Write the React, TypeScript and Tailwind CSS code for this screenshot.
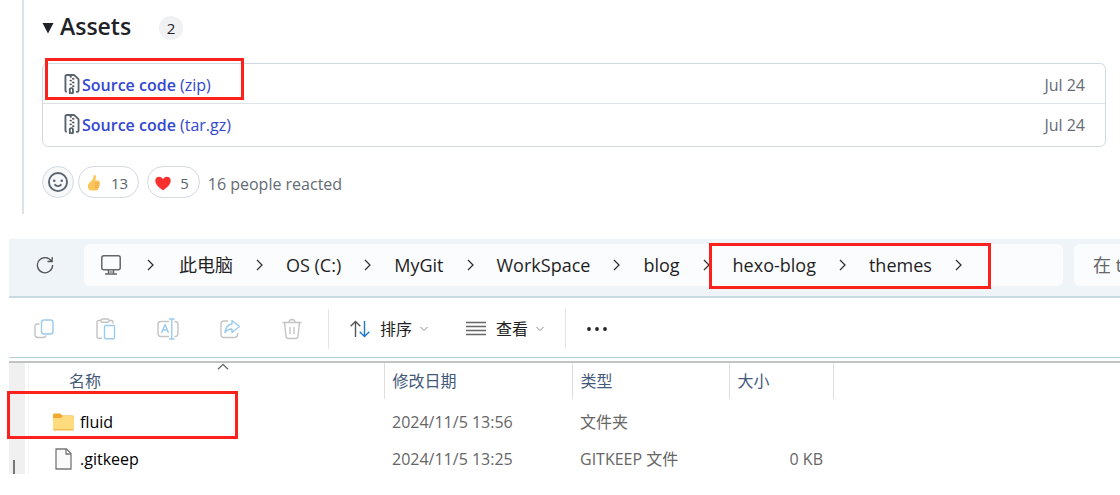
import { Fragment, type ReactNode } from "react";

const ZIP_PATH =
  "M3.5 1.75v11.5c0 .09.048.173.126.217a.75.75 0 0 1-.752 1.298A1.748 1.748 0 0 1 2 13.25V1.75C2 .784 2.784 0 3.75 0h5.586c.464 0 .909.185 1.237.513l2.914 2.914c.329.328.513.773.513 1.237v8.586A1.75 1.75 0 0 1 12.25 15h-.5a.75.75 0 0 1 0-1.5h.5a.25.25 0 0 0 .25-.25V4.664a.25.25 0 0 0-.073-.177L9.513 1.573a.25.25 0 0 0-.177-.073H7.25a.75.75 0 0 1 0 1.5h-.5a.75.75 0 0 1 0-1.5h-3a.25.25 0 0 0-.25.25Zm3.75 8.75h.5c.966 0 1.75.784 1.75 1.75v3a.75.75 0 0 1-.75.75h-2.5a.75.75 0 0 1-.75-.75v-3c0-.966.784-1.75 1.75-1.75ZM6 5.25a.75.75 0 0 1 .75-.75h.5a.75.75 0 0 1 0 1.5h-.5A.75.75 0 0 1 6 5.25Zm.75 2.25h.5a.75.75 0 0 1 0 1.5h-.5a.75.75 0 0 1 0-1.5ZM8 6.75A.75.75 0 0 1 8.75 6h.5a.75.75 0 0 1 0 1.5h-.5A.75.75 0 0 1 8 6.75ZM8.75 3h.5a.75.75 0 0 1 0 1.5h-.5a.75.75 0 0 1 0-1.5ZM8 9.75A.75.75 0 0 1 8.75 9h.5a.75.75 0 0 1 0 1.5h-.5A.75.75 0 0 1 8 9.75Zm-1 2.5v2.25h1v-2.25a.25.25 0 0 0-.25-.25h-.5a.25.25 0 0 0-.25.25Z";

const SMILEY_PATH =
  "M8 0a8 8 0 1 1 0 16A8 8 0 0 1 8 0ZM1.5 8a6.5 6.5 0 1 0 13 0 6.5 6.5 0 0 0-13 0Zm3.82 1.636a.75.75 0 0 1 1.038.175l.007.009c.103.118.22.222.35.31.264.178.683.37 1.285.37.602 0 1.02-.192 1.285-.371.13-.088.247-.192.35-.31l.007-.008a.75.75 0 0 1 1.222.87l-.614-.431c.614.43.614.431.613.431v.001l-.001.002-.002.003-.005.007-.014.019a2.066 2.066 0 0 1-.184.213c-.16.166-.338.316-.53.445-.63.418-1.37.638-2.127.629-.946 0-1.652-.308-2.126-.63a3.331 3.331 0 0 1-.715-.657l-.014-.02-.005-.006-.002-.003v-.002h-.001l.613-.432-.614.43a.75.75 0 0 1 .183-1.044ZM12 7a1 1 0 1 1-2 0 1 1 0 0 1 2 0ZM5 8a1 1 0 1 1 0-2 1 1 0 0 1 0 2Z";

function Highlight({ className }: { className: string }) {
  return (
    <span
      aria-hidden="true"
      className={`pointer-events-none absolute z-10 border-3 border-[#fb221d] ${className}`}
    />
  );
}

function AssetRow({ kind, marked }: { kind: string; marked?: boolean }) {
  return (
    <li className="relative flex h-10 items-center pr-5 pl-[19px]">
      <svg viewBox="0 0 16 16" className="size-5 fill-[#59636e]" aria-hidden="true">
        <path d={ZIP_PATH} />
      </svg>
      <a href="#" className="pt-0.5 text-base leading-6 text-[#3348cf]">
        <span className="font-semibold">Source code</span> ({kind})
      </a>
      <span className="ml-auto pt-0.5 text-base leading-6 text-[#636b75]">Jul 24</span>
      {marked && <Highlight className="-top-1.5 left-0.5 h-[42px] w-[199px]" />}
    </li>
  );
}

function Reaction({ label, count, children }: { label: string; count: number; children: ReactNode }) {
  return (
    <button
      aria-label={label}
      className="flex h-8 items-center gap-2 rounded-full border border-[#d3dae1] pt-0.5 pr-2.5 pl-1.5 text-[15px] text-[#59636e]"
    >
      {children}
      <span>{count}</span>
    </button>
  );
}

function Release() {
  return (
    <section className="ml-[22px] h-[214px] border-l-2 border-[#dde2e7] pr-3.5 pl-[18px] pt-2">
      <details open className="group">
        <summary className="flex list-none items-center">
          <svg viewBox="0 0 12 12" className="mt-1 size-3 fill-[#1f2328]" aria-hidden="true">
            <path d="M0.5 1h11L6 11.5z" />
          </svg>
          <h3 className="ml-1.5 text-[23px] leading-9 font-semibold text-[#1f2328]">Assets</h3>
          <span className="mt-1 ml-7 flex size-6 items-center justify-center rounded-full bg-[#eff1f3] text-[15px] text-[#1f2328]">
            2
          </span>
        </summary>
        <ul className="mt-[19px] divide-y divide-[#dde2e7] rounded-md border border-[#d1d9e0] pb-0.5">
          <AssetRow kind="zip" marked />
          <AssetRow kind="tar.gz" />
        </ul>
      </details>
      <div className="mt-[19px] flex items-center">
        <button
          aria-label="Add reaction"
          className="mr-1 flex size-8 items-center justify-center rounded-full border border-[#d3dae1] bg-[#f6f8fa]"
        >
          <svg viewBox="0 0 16 16" className="size-5 fill-[#59636e]" aria-hidden="true">
            <path d={SMILEY_PATH} />
          </svg>
        </button>
        <Reaction label="Thumbs up" count={13}>
          <svg viewBox="0 0 18 18" className="size-4.5" aria-hidden="true">
            <path
              d="M9 1.2c1-.5 2 .2 2 1.5 0 1.500-.5 2.800-.8 3.900h2.900c1.500 0 2 1.400 1.300 2.200.7.600.6 1.600-.1 2.100.5.700.2 1.600-.5 2 .3.800 0 1.500-.6 1.800.1 1-.6 1.700-1.700 1.700H7c-2.500 0-4.200-1.300-4.200-3.900 0-2.200 1.200-3.500 2.900-4.900C7.300 6.200 8.500 4 8.600 2.100c0-.5.1-.8.4-.9z"
              fill="#fbc75b"
            />
            <path
              d="M10 9.100h4.200M10 11.300h4M10 13.400h3.300"
              stroke="#e69a3d"
              strokeWidth="0.700"
              strokeLinecap="round"
            />
          </svg>
        </Reaction>
        <div className="ml-2 flex">
          <Reaction label="Heart" count={5}>
            <svg viewBox="0 0 18 18" className="size-4.5" aria-hidden="true">
              <path
                d="M9 16.300C4.600 13.400 1.300 10.200 1.300 6.700c0-2.500 1.700-4 3.800-4 1.800 0 3.200 1 3.900 2.500.7-1.500 2.100-2.500 3.900-2.500 2.100 0 3.800 1.500 3.800 4 0 3.500-3.300 6.700-7.700 9.600z"
                fill="#f8312f"
              />
            </svg>
          </Reaction>
        </div>
        <span className="mt-1 ml-2 text-base leading-6 text-[#636b75]">16 people reacted</span>
      </div>
    </section>
  );
}

function Chevron() {
  return (
    <svg viewBox="0 0 9 12" className="h-3 w-[9px] fill-none stroke-[#333]" aria-hidden="true">
      <path d="M2 1l5 5-5 5" strokeWidth="1.300" />
    </svg>
  );
}

function Caret() {
  return (
    <svg viewBox="0 0 8 6" className="ml-2 h-1.5 w-2 fill-none stroke-[#8a8a8a]" aria-hidden="true">
      <path d="M.5 1L4 4.500 7.500 1" />
    </svg>
  );
}

const path = ["此电脑", "OS (C:)", "MyGit", "WorkSpace", "blog"];

function AddressBar() {
  return (
    <div className="flex h-[59px] items-start border-b-2 border-[#c8d9e2] bg-[#eef4f8] pt-[5px] text-lg text-[#1f1f1f]">
      <button aria-label="Refresh" className="mr-7 ml-6 flex h-[42px] w-[23px] items-center justify-center">
        <svg viewBox="0 0 18 18" className="size-4.5 fill-none stroke-[#555]" aria-hidden="true">
          <path d="M15.500 5.200A7.600 7.600 0 1 0 16.600 9M16.200 1v4.500h-4.700" strokeWidth="1.300" />
        </svg>
      </button>
      <nav aria-label="Address" className="flex h-[42px] min-w-0 flex-1 items-center rounded-md bg-[#fbfcfe] pl-[17px]">
        <svg viewBox="0 0 20 20" className="mr-[25px] size-5 shrink-0 overflow-visible fill-none" aria-hidden="true">
          <rect x=".8" y=".8" width="18.400" height="14" rx="2" stroke="#666" strokeWidth="1.500" />
          <path d="M7.500 15v3.500M12.500 15v3.500M4 19h12" stroke="#666" strokeWidth="1.500" />
          <path d="M8.200 15.500h3.600v2.600H8.200z" fill="#aaa" />
        </svg>
        <Chevron />
        <ol className="ml-6 flex items-center gap-[22px] whitespace-nowrap">
          {path.map((name) => (
            <Fragment key={name}>
              <li>{name}</li>
              <li>
                <Chevron />
              </li>
            </Fragment>
          ))}
          <li className="relative flex items-center gap-[22px]">
            <span>hexo-blog</span>
            <Chevron />
            <span>themes</span>
            <Chevron />
            <Highlight className="-top-2 -right-7 -bottom-2.5 -left-6" />
          </li>
        </ol>
      </nav>
      <input
        aria-label="Search"
        placeholder="在 themes 中搜索"
        className="ml-[11px] h-[42px] w-[46px] rounded-l-md bg-[#fbfcfe] pl-[19px] placeholder:text-[#666]"
      />
    </div>
  );
}

function Tool({ label, children }: { label: string; children: ReactNode }) {
  return (
    <button aria-label={label} className="flex size-6 items-center justify-center">
      <svg viewBox="0 0 22 22" className="size-[22px] fill-none" strokeWidth="1.400" strokeLinejoin="round" aria-hidden="true">
        {children}
      </svg>
    </button>
  );
}

function Toolbar() {
  return (
    <div className="flex h-[60px] items-center border-b border-[#b5ced9] pt-0.5 pl-[23px] text-base text-[#222]">
      <div className="flex gap-[38px]">
        <Tool label="Copy">
          <path d="M6.500 6H4.500Q2 6 2 8.500v8Q2 19.500 5 19.500h5q2.500 0 3-2" stroke="#c4c4c4" />
          <rect x="8.500" y="2" width="11.500" height="14" rx="2.500" stroke="#9ccbf0" />
        </Tool>
        <Tool label="Paste">
          <path d="M7 20.300H3.800Q2 20.300 2 18.500V4.300Q2 2.500 3.800 2.500H6M14 2.500h2.200Q18 2.500 18 4.300V5.500" stroke="#c4c4c4" />
          <rect x="6" y="1" width="8" height="3.300" rx="1.600" stroke="#c4c4c4" />
          <rect x="9.500" y="7.500" width="10" height="13.300" rx="1.500" stroke="#9ccbf0" />
        </Tool>
        <Tool label="Rename">
          <path d="M12 3.500H4Q1 3.500 1 6.500v9q0 3 3 3h8M17.500 3.500q3.500 0 3.500 3v9q0 3-3.500 3" stroke="#c4c4c4" />
          <path d="M4.500 15L8 6.500 11.500 15M5.800 12h4.400M12 1h5.500M12 21h5.500M14.800 1v20" stroke="#9ccbf0" />
        </Tool>
        <Tool label="Share">
          <path d="M9 3H5Q2 3 2 6v10.500q0 3 3 3h10.500q3 0 3-3V15" stroke="#c4c4c4" />
          <path d="M13 2.500L20.500 8.500 13 14.500V11Q8.500 11 6 14.500 7 6.500 13 6z" stroke="#9ccbf0" />
        </Tool>
        <Tool label="Delete">
          <path d="M1.500 4.500h19M3.500 4.500L5 18.500Q5.200 20.500 7 20.500h8q1.800 0 2-2L18.500 4.500M8 4.500Q8 1.500 11 1.500T14 4.500M9 9v7M13 9v7" stroke="#c4c4c4" />
        </Tool>
      </div>
      <span className="mr-[21px] ml-6 h-10 w-px bg-[#e4e4e4]" />
      <button className="flex items-center">
        <svg viewBox="0 0 20 18" className="mr-2.5 h-4.5 w-5 fill-none" strokeWidth="1.400" aria-hidden="true">
          <path d="M5.500 17V1.500M.7 6.300L5.500 1.500l4.800 4.800" stroke="#555" />
          <path d="M14.500 1v15.500M9.700 11.700l4.800 4.800 4.800-4.800" stroke="#1a78cf" />
        </svg>
        排序
        <Caret />
      </button>
      <button className="ml-[38px] flex items-center">
        <svg viewBox="0 0 20 16" className="mr-2.5 h-4 w-5" aria-hidden="true">
          <path d="M0 1.500h20M0 5.500h20M0 9.500h20M0 13.500h20" stroke="#666" strokeWidth="1.300" />
        </svg>
        查看
        <Caret />
      </button>
      <span className="mx-[21px] h-10 w-px bg-[#e4e4e4]" />
      <button aria-label="More" className="flex size-5 items-center">
        <svg viewBox="0 0 20 4" className="h-1 w-5 fill-[#222]" aria-hidden="true">
          <circle cx="2" cy="2" r="1.900" />
          <circle cx="10" cy="2" r="1.900" />
          <circle cx="18" cy="2" r="1.900" />
        </svg>
      </button>
    </div>
  );
}

function FileList() {
  const head = "h-9 border-r border-[#dedede] pl-2 text-left font-normal text-[#43597a]";
  return (
    <div className="mt-[3px] flex h-[113px] overflow-hidden border-t-2 border-[#bfc3c4]">
      <div className="flex w-4 items-end bg-[#f0f0f0] pl-1">
        <span className="h-3.5 w-0.5 bg-[#777]" />
      </div>
      <div className="relative ml-[3px] min-w-0 flex-1 border-l border-[#f3f3f3]">
        <svg viewBox="0 0 12 7" className="absolute top-0 left-[188px] h-[7px] w-3 fill-none stroke-[#666]" aria-hidden="true">
          <path d="M1 6.300l5-5 5 5" strokeWidth="1.300" />
        </svg>
        <table className="table-fixed border-collapse text-base text-[#666]">
          <colgroup>
            <col className="w-[355px]" />
            <col className="w-[188px]" />
            <col className="w-[157px]" />
            <col className="w-[104px]" />
          </colgroup>
          <thead>
            <tr>
              <th className="h-9 border-r border-[#dedede] pl-10 text-left font-normal text-[#43597a]">名称</th>
              <th className={head}>修改日期</th>
              <th className={head}>类型</th>
              <th className={head}>大小</th>
            </tr>
          </thead>
          <tbody>
            <tr className="h-11">
              <td className="pt-0.5 pl-6 text-black">
                <span className="flex items-center gap-1.5">
                  <svg viewBox="0 0 21 18" className="h-4.5 w-[21px]" aria-hidden="true">
                    <path d="M0 2Q0 .5 1.500.5H7L9.500 2.500H19.500Q21 2.500 21 4V10H0z" fill="#f0a92e" />
                    <path d="M0 6Q0 5 1 5H8L10 3H19.500Q21 3 21 4.500V16Q21 17.500 19.500 17.500H1.500Q0 17.500 0 16z" fill="#ffdb7d" />
                    <path d="M.5 16.800h20" stroke="#e9b23f" />
                  </svg>
                  fluid
                </span>
              </td>
              <td className="pt-0.5 pl-2">2024/11/5 13:56</td>
              <td className="pt-0.5 pl-2">文件夹</td>
              <td />
            </tr>
            <tr className="h-[31px]">
              <td className="pl-6 text-black">
                <span className="flex items-center gap-1.5">
                  <svg viewBox="0 0 21 22" className="h-[22px] w-[21px]" aria-hidden="true">
                    <path d="M3 1h10.500L18 5.500V21H3z" fill="#fafafa" stroke="#777" strokeWidth="1.300" />
                    <path d="M13 1v5h5" fill="none" stroke="#777" strokeWidth="1.300" />
                  </svg>
                  .gitkeep
                </span>
              </td>
              <td className="pl-2">2024/11/5 13:25</td>
              <td className="pl-2">GITKEEP 文件</td>
              <td className="pr-2.5 text-right">0 KB</td>
            </tr>
          </tbody>
        </table>
      </div>
      <Highlight className="top-[152px] -left-0.5 h-12 w-[231px]" />
    </div>
  );
}

export default function App() {
  return (
    <main className="min-h-screen bg-white font-['Open_Sans','Noto_Sans_CJK_SC',sans-serif]">
      <Release />
      <section className="relative mt-[25px] ml-[9px] whitespace-nowrap">
        <AddressBar />
        <Toolbar />
        <FileList />
      </section>
    </main>
  );
}
